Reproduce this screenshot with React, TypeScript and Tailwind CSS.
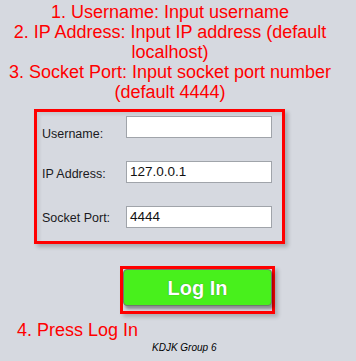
import React from "react";

const font = { fontFamily: '"Liberation Sans", Arial, sans-serif' };

export default function App() {
  return (
    <div
      className="w-[356px] h-[361px] bg-[#d6d9e0] overflow-hidden flex flex-col items-start"
      style={font}
    >
      <div className="w-[340px] pt-[2px] text-center text-[18px] leading-[20px] text-[#ff0000]">
        1. Username: Input username
        <br />
        2. IP Address: Input IP address (default
        <br />
        localhost)
        <br />
        3. Socket Port: Input socket port number
        <br />
        (default 4444)
      </div>

      <div className="ml-[34px] mt-[7px] w-[251px] h-[135px] border-[3px] border-[#ff0000] shadow-[3px_3px_4px_rgba(0,0,0,0.22),inset_3px_3px_3px_rgba(0,0,0,0.07)] pt-[4px] flex flex-col gap-[23px]">
        <div className="flex items-start h-[22px]">
          <div className="w-[89px] pl-[5px] pt-[11px] text-[12.5px] leading-[14px] text-[#1a1a22]">
            Username:
          </div>
          <div className="w-[146px] h-[22px] bg-white border border-[#a0a4aa]" />
        </div>
        <div className="flex items-start h-[22px]">
          <div className="w-[89px] pl-[5px] pt-[6px] text-[12.5px] leading-[14px] text-[#1a1a22]">
            IP Address:
          </div>
          <div className="w-[146px] h-[22px] bg-white border border-[#a0a4aa] pl-[3px] flex items-center text-[13.5px] text-[#111]">
            127.0.0.1
          </div>
        </div>
        <div className="flex items-start h-[22px]">
          <div className="w-[89px] pl-[5px] pt-[5px] text-[12.5px] leading-[14px] text-[#1a1a22]">
            Socket Port:
          </div>
          <div className="w-[146px] h-[22px] bg-white border border-[#a0a4aa] pl-[3px] flex items-center text-[13.5px] text-[#111]">
            4444
          </div>
        </div>
      </div>

      <div className="ml-[120px] mt-[22px] w-[155px] h-[48px] border-[3px] border-[#ff0000] shadow-[3px_3px_4px_rgba(0,0,0,0.2)]">
        <button
          className="w-full h-[37px] rounded-[4px] border border-[#6f7a6f] bg-[#48f01c] shadow-[2px_3px_3px_rgba(0,0,0,0.35)] flex items-center justify-center text-white font-bold text-[20px] leading-none"
          style={{ ...font, textShadow: "0 0 1px rgba(0,0,0,0.5)" }}
        >
          Log In
        </button>
      </div>

      <div className="ml-[17px] mt-[6px] text-[18px] leading-[20px] text-[#ff0000]">
        4. Press Log In
      </div>
      <div className="ml-[152px] mt-[2px] text-[10px] leading-[12px] italic text-black">
        KDJK Group 6
      </div>
    </div>
  );
}
